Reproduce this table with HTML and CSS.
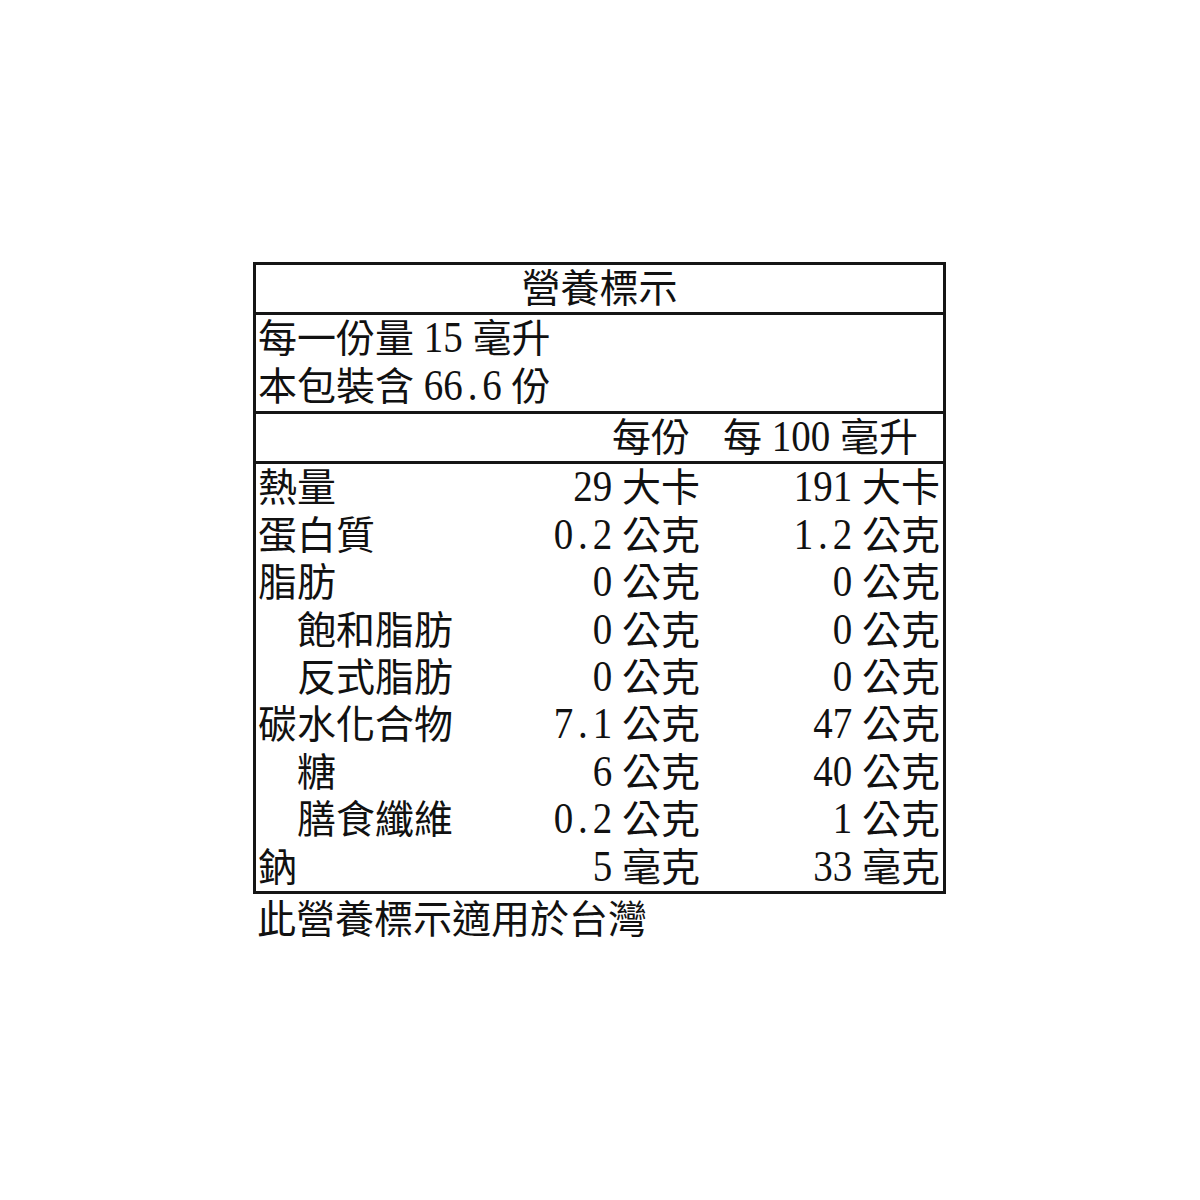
FILE: index.html
```html
<!DOCTYPE html>
<html lang="zh-Hant">
<head>
<meta charset="utf-8">
<title>營養標示</title>
<link rel="stylesheet" href="styles.css">
</head>
<body>
<div class="label">
  <div class="title">營養標示</div>
  <div class="serving">
    <div class="line">每一份量 <span class="n">15</span> 毫升</div>
    <div class="line">本包裝含 <span class="n">66<span class="dot">.</span>6</span> 份</div>
  </div>
  <div class="head">
    <div></div>
    <div class="h1">每份</div>
    <div class="h2">每 <span class="n">100</span> 毫升</div>
  </div>
  <div class="rows">
    <div class="row"><div class="name">熱量</div><div class="v">
      <span class="n">29</span> 大卡</div><div class="v"><span class="n">191</span> 大卡</div></div>
    <div class="row"><div class="name">蛋白質</div><div class="v"><span class="n">0<span class="dot">.</span>2</span> 公克</div><div class="v"><span class="n">1<span class="dot">.</span>2</span> 公克</div></div>
    <div class="row"><div class="name">脂肪</div><div class="v"><span class="n">0</span> 公克</div><div class="v"><span class="n">0</span> 公克</div></div>
    <div class="row"><div class="name sub">飽和脂肪</div><div class="v"><span class="n">0</span> 公克</div><div class="v"><span class="n">0</span> 公克</div></div>
    <div class="row"><div class="name sub">反式脂肪</div><div class="v"><span class="n">0</span> 公克</div><div class="v"><span class="n">0</span> 公克</div></div>
    <div class="row"><div class="name">碳水化合物</div><div class="v"><span class="n">7<span class="dot">.</span>1</span> 公克</div><div class="v"><span class="n">47</span> 公克</div></div>
    <div class="row"><div class="name sub">糖</div><div class="v"><span class="n">6</span> 公克</div><div class="v"><span class="n">40</span> 公克</div></div>
    <div class="row"><div class="name sub">膳食纖維</div><div class="v"><span class="n">0<span class="dot">.</span>2</span> 公克</div><div class="v"><span class="n">1</span> 公克</div></div>
    <div class="row"><div class="name">鈉</div><div class="v"><span class="n">5</span> 毫克</div><div class="v"><span class="n">33</span> 毫克</div></div>
  </div>
</div>
<div class="note">此營養標示適用於台灣</div>
</body>
</html>
```
FILE: styles.css
```css
html, body {
  margin: 0;
  padding: 0;
  background: #ffffff;
}
body {
  font-family: "Liberation Serif", "Noto Sans CJK TC", serif;
  font-size: 39px;
  color: #111111;
  padding: 262px 0 0 253px;
}
.label {
  box-sizing: border-box;
  width: 693px;
  border: 3px solid #151515;
}
.title {
  height: 47px;
  line-height: 47px;
  text-align: center;
  border-bottom: 3px solid #151515;
}
.serving {
  height: 96px;
  padding-left: 2px;
  border-bottom: 3px solid #151515;
}
.line {
  height: 48px;
  line-height: 48px;
  white-space: nowrap;
}
.head {
  display: grid;
  grid-template-columns: 200px 244px 240px;
  height: 47px;
  line-height: 47px;
  border-bottom: 3px solid #151515;
  white-space: nowrap;
}
.h1 {
  text-align: right;
  padding-right: 10px;
}
.h2 {
  text-align: right;
  padding-right: 22px;
}
.rows {
  height: 427px;
  display: flex;
  flex-direction: column;
}
.row {
  flex: 1;
  display: grid;
  grid-template-columns: 200px 244px 240px;
  align-items: center;
  line-height: 47px;
  white-space: nowrap;
}
.name {
  padding-left: 2px;
}
.name.sub {
  padding-left: 41px;
}
.v {
  text-align: right;
}
.n {
  display: inline-block;
  line-height: 1;
  transform: scaleY(1.12);
  transform-origin: 50% 84%;
}
.dot {
  display: inline-block;
  width: 0.5em;
  text-align: center;
}
.note {
  line-height: 52px;
  padding-left: 4px;
  white-space: nowrap;
}
```
